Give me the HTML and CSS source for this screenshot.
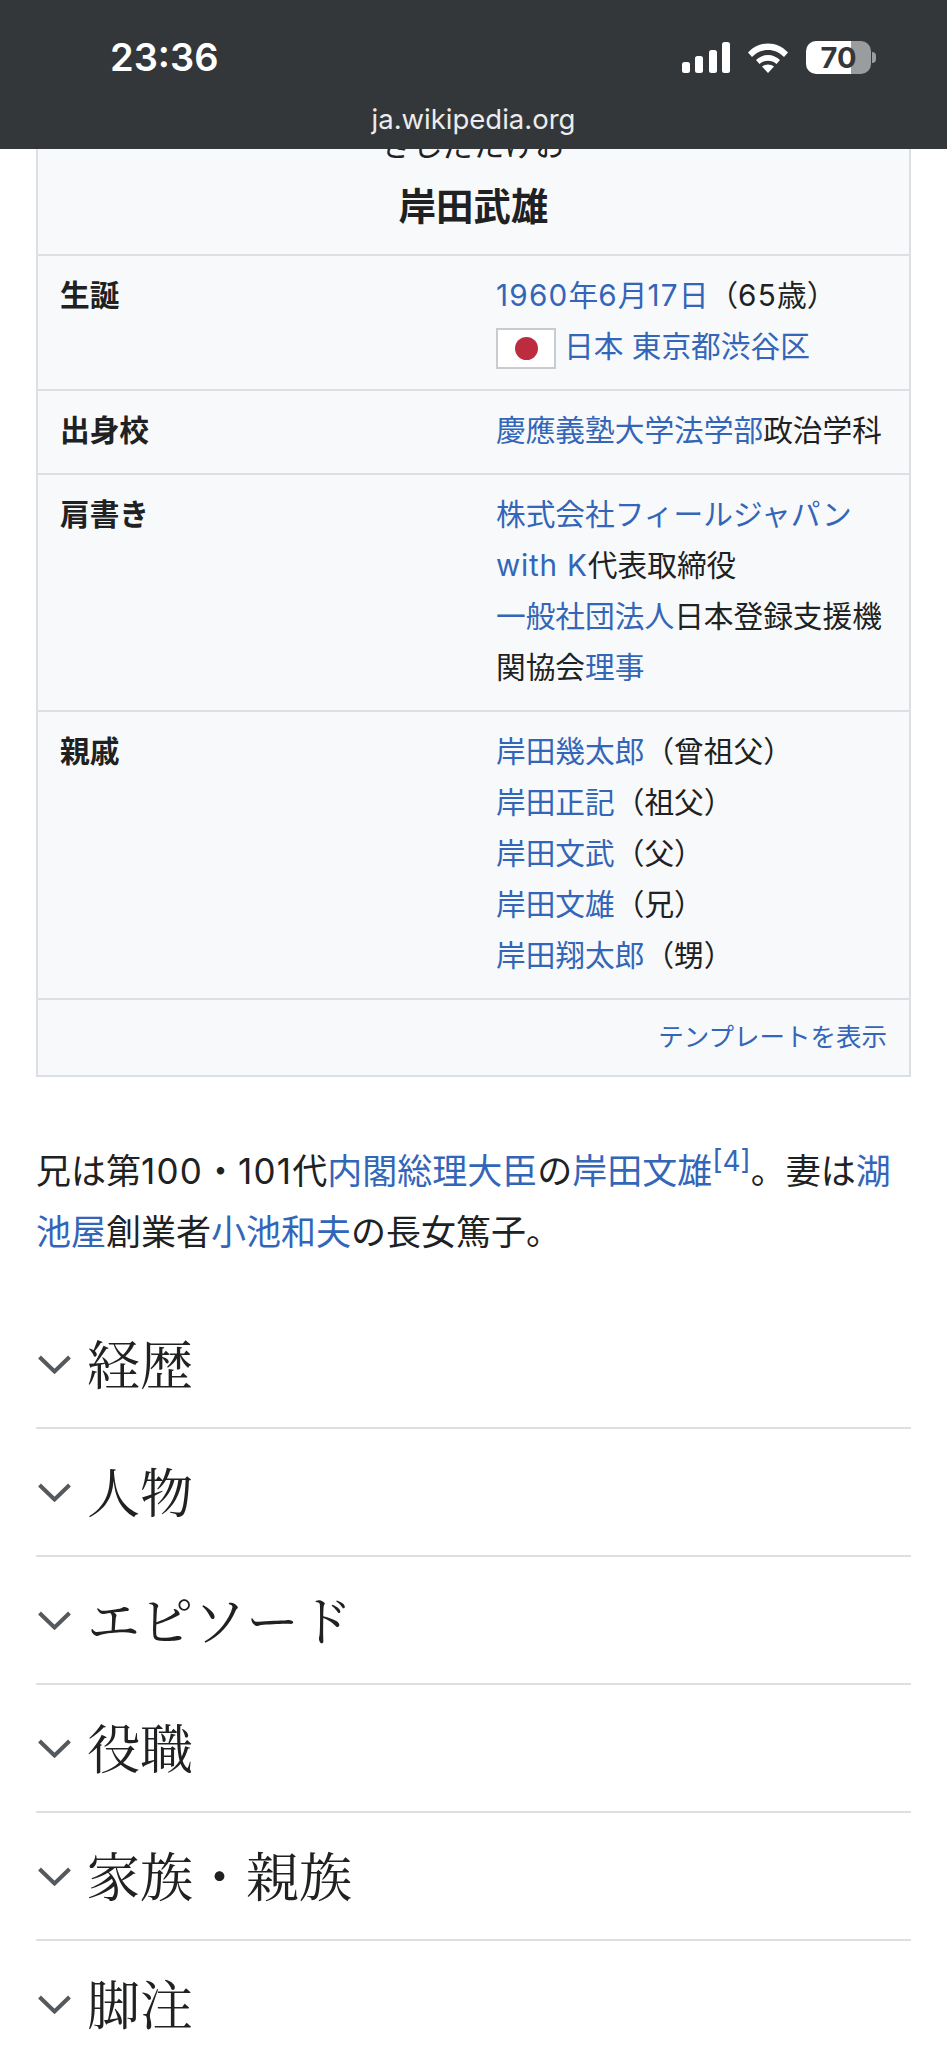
FILE: index.html
```html
<!DOCTYPE html>
<html lang="ja">
<head>
    <meta charset="utf-8">
    <title>岸田武雄 - Wikipedia</title>
    <link rel="stylesheet" href="styles.css">
</head>
<body>
    <header class="top-bar">
        <div class="status-row">
            <span class="clock">23:36</span>
            <div class="status-icons">
                <svg class="signal" width="48" height="31" viewBox="0 0 48 31">
                    <rect x="0" y="20" width="8" height="11" rx="2.5"/>
                    <rect x="13" y="14" width="8" height="17" rx="2.5"/>
                    <rect x="27" y="8" width="8" height="23" rx="2.5"/>
                    <rect x="40" y="0" width="8" height="31" rx="2.5"/>
                </svg>
                <svg class="wifi" width="42" height="31" viewBox="0 0 42 31">
                    <path d="M1 10.5C6.5 4.5 13.5 1.5 21 1.5S35.500 4.500 41 10.500L37 15C32.500 10.500 27 8 21 8S9.500 10.500 5 15Z"/>
                    <path d="M9 18C12 15 16.500 13 21 13S30 15 33 18L29.500 22C27 20 24 18.800 21 18.800S15 20 12.500 22Z"/>
                    <path d="M15 24.500C16.500 23.300 18.800 22.500 21 22.500S25.500 23.300 27 24.500L21 31Z"/>
                </svg>
                <div class="battery">
                    <div class="battery-body"><span class="battery-num">70</span></div>
                    <div class="battery-nub"></div>
                </div>
            </div>
        </div>
        <div class="url">ja.wikipedia.org</div>
    </header>

    <main class="page">
        <div class="infobox">
            <div class="infobox-title">
                <div class="reading">きしだたけお</div>
                <div class="name">岸田武雄</div>
            </div>
            <div class="info-row">
                <div class="info-label">生誕</div>
                <div class="info-value">
                    <a href="#"><span class="num">1960</span>年<span class="num">6</span>月<span class="num">17</span>日</a>（<span class="num">65</span>歳）<br>
                    <span class="flag"><span class="flag-sun"></span></span><a href="#">日本 東京都渋谷区</a>
                </div>
            </div>
            <div class="info-row">
                <div class="info-label">出身校</div>
                <div class="info-value"><a href="#">慶應義塾大学法学部</a>政治学科</div>
            </div>
            <div class="info-row">
                <div class="info-label">肩書き</div>
                <div class="info-value">
                    <a href="#">株式会社フィールジャパン</a><br>
                    <a href="#" class="latin">with K</a>代表取締役<br>
                    <a href="#">一般社団法人</a>日本登録支援機<br>関協会<a href="#">理事</a>
                </div>
            </div>
            <div class="info-row">
                <div class="info-label">親戚</div>
                <div class="info-value">
                    <a href="#">岸田幾太郎</a>（曾祖父）<br>
                    <a href="#">岸田正記</a>（祖父）<br>
                    <a href="#">岸田文武</a>（父）<br>
                    <a href="#">岸田文雄</a>（兄）<br>
                    <a href="#">岸田翔太郎</a>（甥）
                </div>
            </div>
            <div class="template-link"><a href="#">テンプレートを表示</a></div>
        </div>

        <p class="lead">兄は第<span class="num">100</span>・<span class="num">101</span>代<a href="#">内閣総理大臣</a>の<a href="#">岸田文雄</a><sup class="ref"><a href="#">[4]</a></sup>。妻は<a href="#">湖</a><br><a href="#">池屋</a>創業者<a href="#">小池和夫</a>の長女篤子。</p>

        <section class="sections">
            <div class="section-row">
                <svg class="chevron" width="33" height="19" viewBox="0 0 33 19"><path d="M1.500 2L16.500 16.500L31.500 2"/></svg>
                <h2>経歴</h2>
            </div>
            <div class="section-row">
                <svg class="chevron" width="33" height="19" viewBox="0 0 33 19"><path d="M1.500 2L16.500 16.500L31.500 2"/></svg>
                <h2>人物</h2>
            </div>
            <div class="section-row">
                <svg class="chevron" width="33" height="19" viewBox="0 0 33 19"><path d="M1.500 2L16.500 16.500L31.500 2"/></svg>
                <h2>エピソード</h2>
            </div>
            <div class="section-row">
                <svg class="chevron" width="33" height="19" viewBox="0 0 33 19"><path d="M1.500 2L16.500 16.500L31.500 2"/></svg>
                <h2>役職</h2>
            </div>
            <div class="section-row">
                <svg class="chevron" width="33" height="19" viewBox="0 0 33 19"><path d="M1.500 2L16.500 16.500L31.500 2"/></svg>
                <h2>家族・親族</h2>
            </div>
            <div class="section-row">
                <svg class="chevron" width="33" height="19" viewBox="0 0 33 19"><path d="M1.500 2L16.500 16.500L31.500 2"/></svg>
                <h2>脚注</h2>
            </div>
        </section>
    </main>
</body>
</html>
```

FILE: styles.css
```css
html, body {
    margin: 0;
    height: 2048px;
    overflow: hidden;
    background-color: #fff;
}

body {
    font-family: Inter, "Noto Sans CJK JP", sans-serif;
    color: #202122;
}

a {
    color: #3366b8;
    text-decoration: none;
}

/* digits run a bit wider in the original */
.num {
    letter-spacing: 1.200px;
}

.latin {
    letter-spacing: 0.800px;
}

/* browser bar, lies over the scrolled page */
.top-bar {
    position: fixed;
    top: 0;
    left: 0;
    right: 0;
    height: 149px;
    background-color: #33373a;
    color: #fff;
    z-index: 2;
}

.status-row {
    display: flex;
    justify-content: space-between;
    align-items: center;
    padding: 37px 71px 0 110px;
    height: 40px;
}

.clock {
    font-family: Inter, sans-serif;
    font-size: 38px;
    font-weight: 600;
}

.status-icons {
    display: flex;
    align-items: center;
    gap: 17px;
}

.signal, .wifi {
    fill: #fff;
}

.battery {
    display: flex;
    align-items: center;
    gap: 1px;
}

.battery-body {
    width: 65px;
    height: 33px;
    border-radius: 10px;
    background: linear-gradient(to right, #fff 45px, #9a9c9e 45px);
    display: flex;
    align-items: center;
    justify-content: center;
}

.battery-num {
    font-family: Inter, sans-serif;
    font-size: 29px;
    font-weight: 700;
    color: #33373a;
}

.battery-nub {
    width: 4px;
    height: 11px;
    border-radius: 0 6px 6px 0;
    background-color: #9a9c9e;
}

.url {
    margin-top: 25px;
    text-align: center;
    font-family: Inter, "Liberation Sans", sans-serif;
    font-size: 27.500px;
    color: #ececec;
}

/* page */
.page {
    padding: 117px 36px 0 36px;
}

.infobox {
    background-color: #f8f9fa;
    border: 2px solid #dcdfe4;
    font-size: 29.700px;
    line-height: 51px;
}

.infobox-title {
    text-align: center;
    height: 135px;
}

.reading {
    font-size: 30.700px;
}

.name {
    font-size: 37.500px;
    font-weight: 700;
    margin-top: 11px;
}

.info-row {
    display: grid;
    grid-template-columns: 458px 1fr;
    border-top: 2px solid #dcdfe4;
    padding: 14px 0 17px 0;
}

.info-label {
    padding-left: 22px;
    font-weight: 700;
}

.info-value {
    white-space: nowrap;
}

.flag {
    display: inline-block;
    box-sizing: border-box;
    width: 60px;
    height: 41px;
    margin-right: 8px;
    background-color: #fff;
    border: 2px solid #c8ccd1;
    vertical-align: middle;
    position: relative;
}

.flag-sun {
    position: absolute;
    left: 17px;
    top: 7px;
    width: 23px;
    height: 23px;
    border-radius: 50%;
    background-color: #bc2c3e;
}

.template-link {
    border-top: 2px solid #dcdfe4;
    text-align: right;
    padding: 12px 22px 13px 0;
    font-size: 25.500px;
    line-height: 50px;
}

.lead {
    margin: 64px 0 0 0;
    font-size: 35px;
    line-height: 61px;
    color: #202122;
}

.ref {
    font-size: 28px;
    line-height: 0;
}

.sections {
    margin-top: 38px;
}

.section-row {
    display: flex;
    align-items: center;
    gap: 16px;
    height: 126px;
    padding-left: 2px;
    border-bottom: 2px solid #dcdfe4;
}

.section-row h2 {
    margin: 0;
    padding-bottom: 5px;
    font-family: "Noto Serif CJK JP", "Liberation Serif", "Noto Sans CJK JP", serif;
    font-size: 53px;
    font-weight: 400;
    color: #202122;
}

.chevron {
    fill: none;
    stroke: #54595d;
    stroke-width: 4;
}
```
